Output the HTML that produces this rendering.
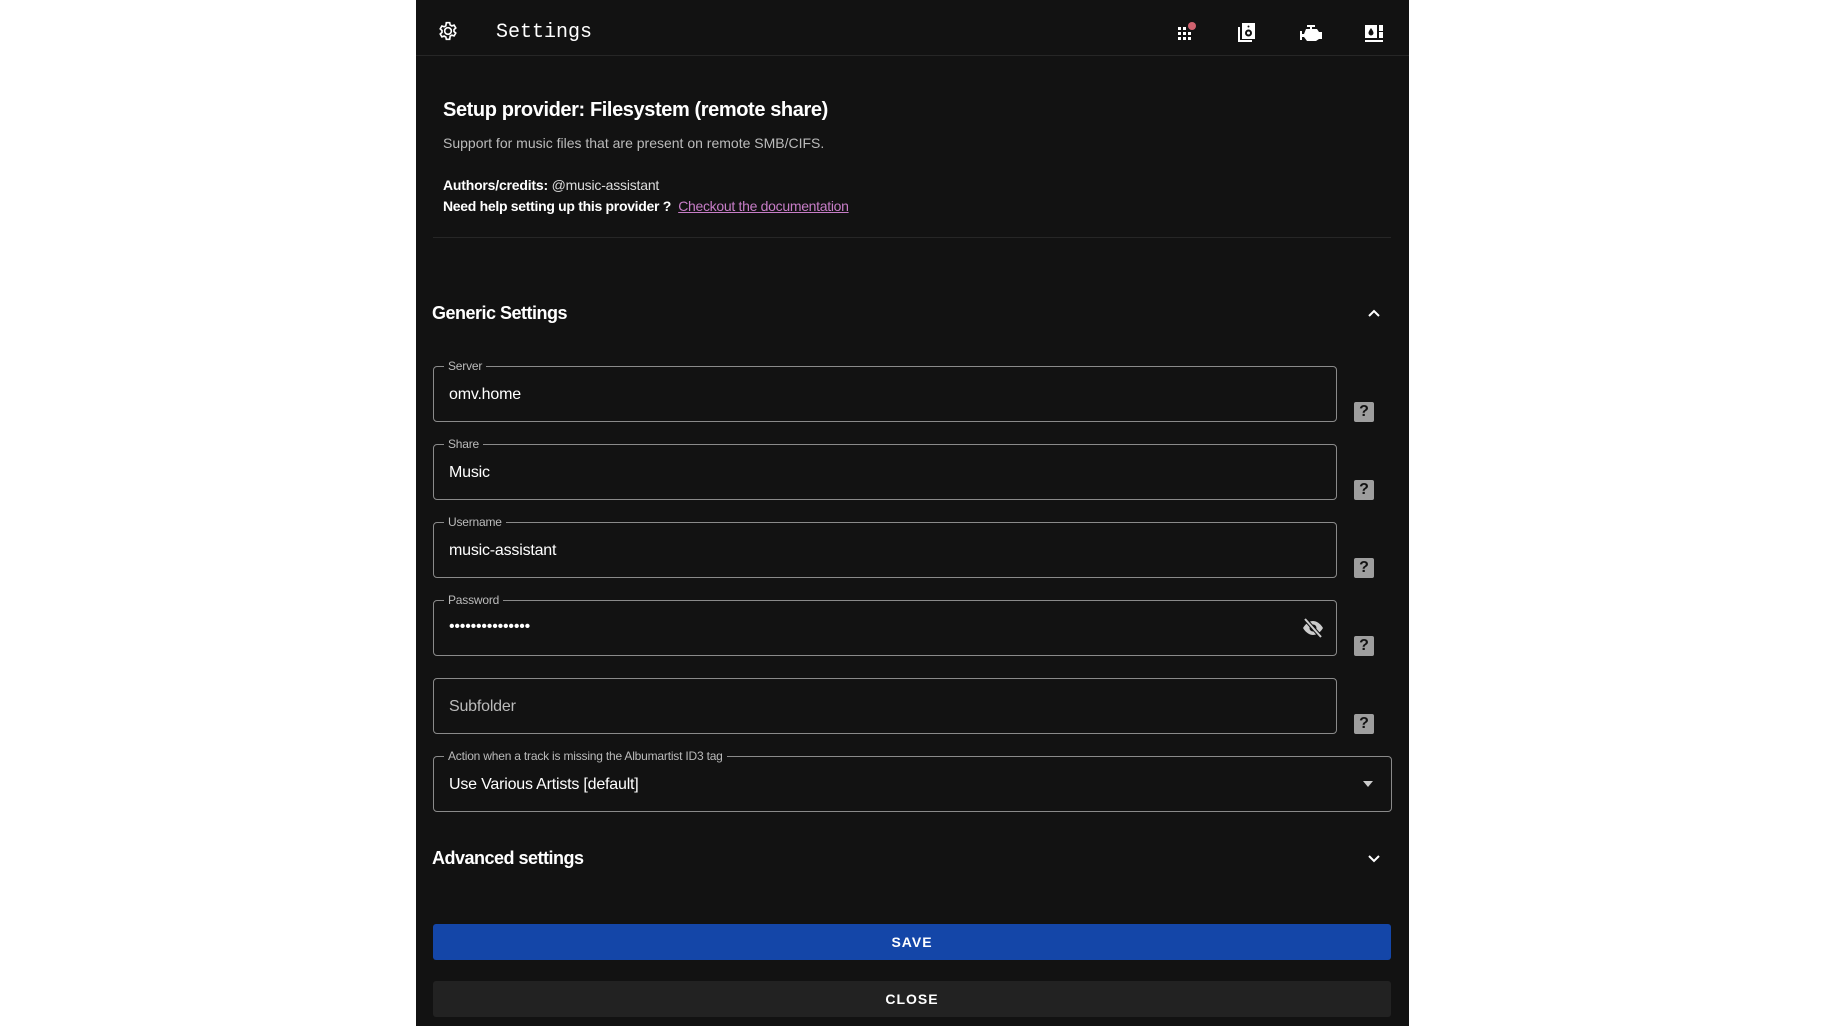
<!DOCTYPE html>
<html><head><meta charset="utf-8"><style>
body{margin:0;width:1824px;height:1026px;background:#fff;font-family:"Liberation Sans",sans-serif;overflow:hidden;position:relative}
#p{position:absolute;left:416px;top:0;width:993px;height:1026px;background:#121212;color:#fff}
.a{position:absolute;white-space:nowrap}
.f{position:absolute;left:17px;width:902px;height:54px;border:1px solid #8a8a8a;border-radius:4px}
.f .l{position:absolute;left:10px;top:-8px;font-size:12px;color:#bbb;background:#121212;padding:0 4px;line-height:14px;letter-spacing:-0.2px}
.f .v{position:absolute;left:15px;top:19px;font-size:16px;color:#fff;letter-spacing:-0.2px}
.h{position:absolute;left:938px;width:20px;height:20px;background:#9e9e9e;border-radius:2px;color:#121212;font-weight:bold;font-size:16px;text-align:center;line-height:20px}
</style></head><body><div id="p">
<div class="a" style="left:0;top:55px;width:993px;height:1px;background:#262626"></div>
<svg class="a" style="left:22px;top:21px" width="20" height="20" viewBox="0 0 24 24"><path fill="none" stroke="#fff" stroke-width="2" d="M12 8a4 4 0 1 0 0 8a4 4 0 1 0 0-8zM10 2h4l.6 2.8 2 1.1 2.7-.9 2 3.4-2.1 1.9v2.3l2.1 1.9-2 3.4-2.7-.9-2 1.1L14 22h-4l-.6-2.8-2-1.1-2.7.9-2-3.4 2.1-1.9v-2.3L2.7 9.4l2-3.4 2.7.9 2-1.1z"/></svg>
<div class="a" style="left:80px;top:21px;font-family:'Liberation Mono',monospace;font-size:20px">Settings</div>
<svg class="a" style="left:760px;top:22px" width="22" height="22" viewBox="0 0 22 22"><g fill="#fff"><rect x="2" y="5" width="3" height="3"/><rect x="7" y="5" width="3" height="3"/><rect x="2" y="10" width="3" height="3"/><rect x="7" y="10" width="3" height="3"/><rect x="12" y="10" width="3" height="3"/><rect x="2" y="15" width="3" height="3"/><rect x="7" y="15" width="3" height="3"/><rect x="12" y="15" width="3" height="3"/></g><circle cx="16" cy="4" r="4" fill="#d0626f"/></svg>
<svg class="a" style="left:820px;top:21px" width="22" height="22" viewBox="0 0 22 22"><path fill="none" stroke="#fff" stroke-width="2" d="M3 6v14h13"/><rect x="6" y="2" width="13" height="16" fill="#fff"/><circle cx="12.5" cy="12" r="3.5" fill="#121212"/><circle cx="12.5" cy="12" r="1.5" fill="#fff"/><circle cx="12.5" cy="5.5" r="1" fill="#121212"/></svg>
<svg class="a" style="left:883px;top:23px" width="24" height="20" viewBox="0 0 24 20"><path fill="#fff" d="M8 2h8v2h-3v2h5l2 3h3v7h-3l-3 2H8l-3-4H3v3H1V8h2v3h2l2-5h4V4H8z"/></svg>
<svg class="a" style="left:947px;top:22px" width="22" height="22" viewBox="0 0 22 22"><rect x="2" y="3" width="12" height="13" fill="#fff"/><rect x="16" y="3" width="4" height="6" fill="#fff"/><rect x="16" y="10" width="4" height="6" fill="#fff"/><rect x="2" y="18" width="18" height="2" fill="#fff"/><path d="M8 6c-2 3-2.5 4-2.5 5a2.5 2.5 0 0 0 5 0c0-1-.5-2-2.5-5z" fill="#121212"/></svg>
<div class="a" style="left:27px;top:99px;font-size:20px;font-weight:bold;letter-spacing:-0.4px">Setup provider: Filesystem (remote share)</div>
<div class="a" style="left:27px;top:135px;font-size:14px;color:#bbb">Support for music files that are present on remote SMB/CIFS.</div>
<div class="a" style="left:27px;top:177px;font-size:14px;color:#ddd;letter-spacing:-0.2px"><b style="color:#fff">Authors/credits:</b> @music-assistant</div>
<div class="a" style="left:27px;top:198px;font-size:14px;font-weight:bold;letter-spacing:-0.3px">Need help setting up this provider ? &nbsp;<span style="font-weight:normal;color:#c77dc7;text-decoration:underline">Checkout the documentation</span></div>
<div class="a" style="left:17px;top:237px;width:958px;height:1px;background:#262626"></div>
<div class="a" style="left:16px;top:303px;font-size:18px;font-weight:bold;letter-spacing:-0.5px">Generic Settings</div>
<svg class="a" style="left:951px;top:306px" width="14" height="14" viewBox="0 0 14 14"><path d="M2 10l5-5 5 5" fill="none" stroke="#fff" stroke-width="2"/></svg>
<div class="f" style="top:366px"><span class="l">Server</span><span class="v">omv.home</span></div><div class="h" style="top:402px">?</div>
<div class="f" style="top:444px"><span class="l">Share</span><span class="v">Music</span></div><div class="h" style="top:480px">?</div>
<div class="f" style="top:522px"><span class="l">Username</span><span class="v">music-assistant</span></div><div class="h" style="top:558px">?</div>
<div class="f" style="top:600px"><span class="l">Password</span><span class="v" style="top:17px">•••••••••••••••</span>
<svg class="a" style="left:867px;top:16px" width="24" height="22" viewBox="0 0 24 22"><path d="M2 11c3-5 7-7 10-7s7 2 10 7c-3 5-7 7-10 7s-7-2-10-7z" fill="#ccc"/><circle cx="12" cy="11" r="3.5" fill="#121212"/><path d="M4 2l16 18" stroke="#121212" stroke-width="4"/><path d="M4 2l16 18" stroke="#ccc" stroke-width="2"/></svg></div><div class="h" style="top:636px">?</div>
<div class="f" style="top:678px"><span class="v" style="color:#bbb">Subfolder</span></div><div class="h" style="top:714px">?</div>
<div class="f" style="top:756px;width:957px"><span class="l">Action when a track is missing the Albumartist ID3 tag</span><span class="v">Use Various Artists [default]</span>
<svg class="a" style="left:928px;top:23px" width="12" height="8" viewBox="0 0 12 8"><path d="M1 1h10L6 7z" fill="#ccc"/></svg></div>
<div class="a" style="left:16px;top:848px;font-size:18px;font-weight:bold;letter-spacing:-0.5px">Advanced settings</div>
<svg class="a" style="left:951px;top:852px" width="14" height="14" viewBox="0 0 14 14"><path d="M2 4l5 5 5-5" fill="none" stroke="#fff" stroke-width="2"/></svg>
<div class="a" style="left:17px;top:924px;width:958px;height:36px;background:#1446a8;border-radius:3px;text-align:center;line-height:36px;font-size:14px;font-weight:bold;letter-spacing:1px">SAVE</div>
<div class="a" style="left:17px;top:981px;width:958px;height:36px;background:#222;border-radius:3px;text-align:center;line-height:36px;font-size:14px;font-weight:bold;letter-spacing:1px">CLOSE</div>
</div></body></html>
